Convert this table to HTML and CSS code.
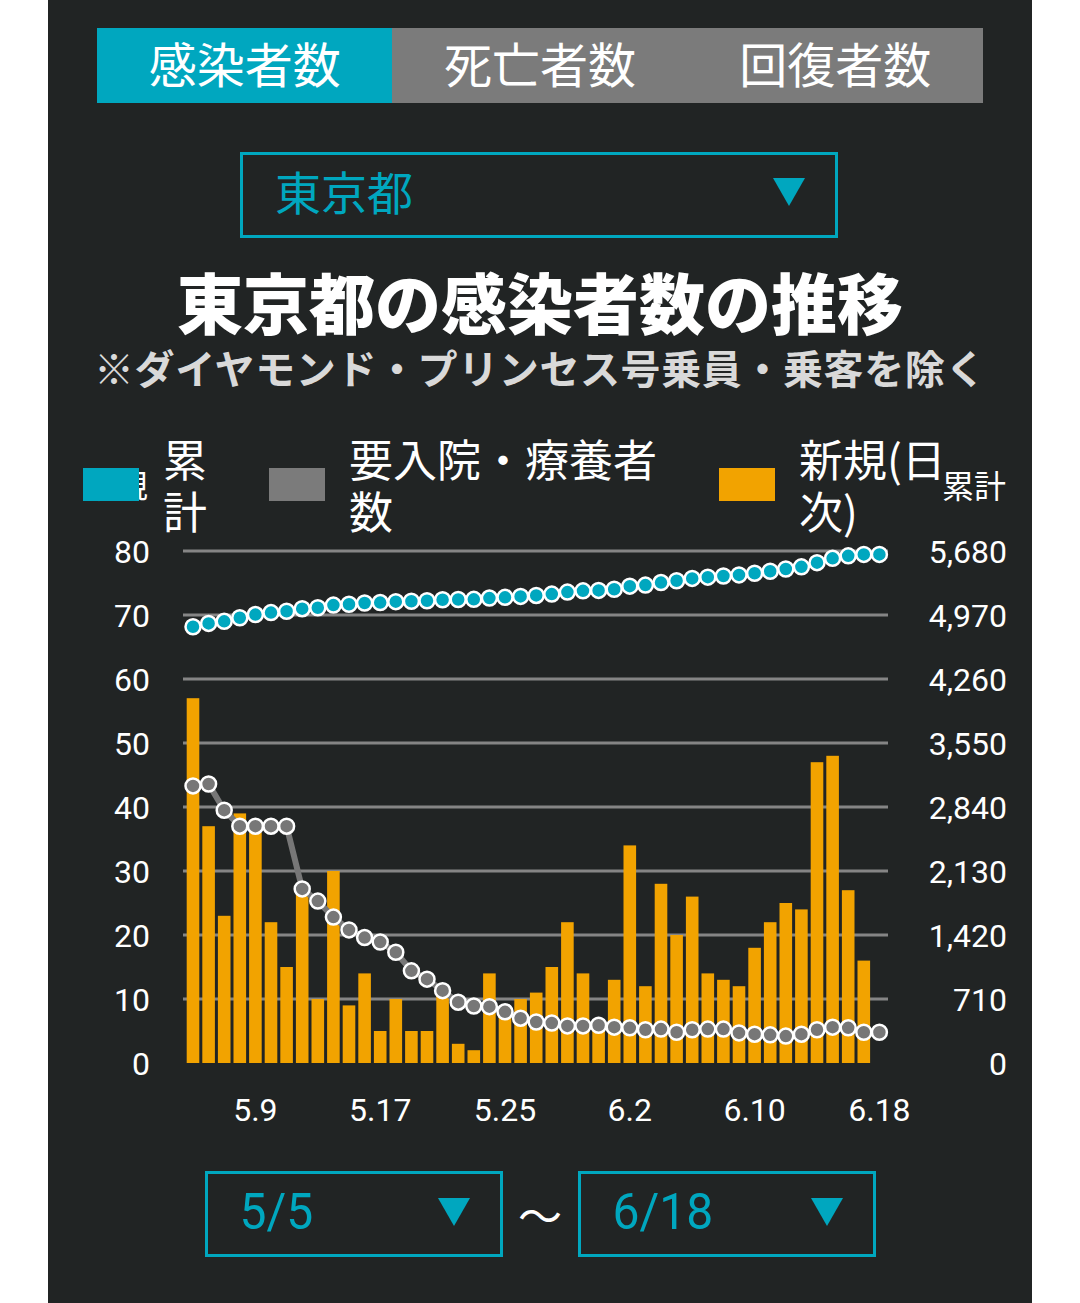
FILE: index.html
```html
<!DOCTYPE html>
<html lang="ja">
<head>
<meta charset="utf-8">
<title>東京都の感染者数の推移</title>
<link rel="stylesheet" href="styles.css">
</head>
<body>
<div class="panel">
  <div class="tabs">
    <div class="tab active">感染者数</div>
    <div class="tab">死亡者数</div>
    <div class="tab">回復者数</div>
  </div>
  <div class="select pref">
    <span class="select-text">東京都</span>
    <span class="tri"></span>
  </div>
  <h1 class="title">東京都の感染者数の推移</h1>
  <p class="note">※ダイヤモンド・プリンセス号乗員・乗客を除く</p>
  <div class="legend">
    <span class="axis-title axis-left">新規</span>
    <span class="axis-title axis-right">累計</span>
    <div class="legend-item">
      <span class="swatch teal"></span>
      <span class="legend-label w1">累<br>計</span>
    </div>
    <div class="legend-item">
      <span class="swatch gray"></span>
      <span class="legend-label w2">要入院・療養者<br>数</span>
    </div>
    <div class="legend-item">
      <span class="swatch orange"></span>
      <span class="legend-label w3">新規(日<br>次)</span>
    </div>
  </div>
  <svg id="chart" class="chart" width="984" height="600" viewBox="0 0 984 600" xmlns="http://www.w3.org/2000/svg"></svg>
  <div class="range">
    <div class="select date">
      <span class="select-text">5/5</span>
      <span class="tri"></span>
    </div>
    <span class="tilde">〜</span>
    <div class="select date">
      <span class="select-text">6/18</span>
      <span class="tri"></span>
    </div>
  </div>
</div>
<script src="chart.js"></script>
</body>
</html>
```

FILE: styles.css
```css
html, body {
  margin: 0;
  padding: 0;
  background: #ffffff;
}
body {
  font-family: "Noto Sans CJK JP", "Noto Sans", sans-serif;
}
.panel {
  width: 984px;
  min-height: 1303px;
  margin-left: 48px;
  background: #212424;
  padding-top: 28px;
  box-sizing: border-box;
  color: #ffffff;
}
.tabs {
  display: flex;
  width: 886px;
  height: 75px;
  margin-left: 49px;
}
.tab {
  flex: 1;
  display: flex;
  align-items: center;
  justify-content: center;
  padding-bottom: 8px;
  box-sizing: border-box;
  background: #7b7b7b;
  color: #ffffff;
  font-size: 48px;
  line-height: 1;
}
.tab.active {
  background: #00a7bf;
}
.select {
  display: flex;
  align-items: center;
  justify-content: space-between;
  border: 3px solid #00a7bf;
  box-sizing: border-box;
  color: #00a7bf;
}
.select.pref {
  width: 598px;
  height: 86px;
  margin: 49px 0 0 192px;
  padding: 0 30px 6px 32px;
}
.select.pref .select-text {
  font-size: 46px;
  line-height: 1;
  padding-bottom: 4px;
}
.tri {
  width: 0;
  height: 0;
  border-left: 16px solid transparent;
  border-right: 16px solid transparent;
  border-top: 28px solid #00a7bf;
}
.title {
  margin: 26px 0 0;
  text-align: center;
  font-size: 66px;
  line-height: 72px;
  font-weight: 900;
  color: #ffffff;
}
.note {
  margin: 7px 0 0;
  text-align: center;
  font-size: 40px;
  line-height: 48px;
  font-weight: 700;
  color: #d9d9d9;
  letter-spacing: 0.6px;
}
.legend {
  position: relative;
  display: flex;
  align-items: center;
  gap: 62px;
  margin-top: 42px;
  padding-left: 35px;
  height: 107px;
  padding-bottom: 6px;
  box-sizing: border-box;
}
.legend-item {
  position: relative;
  display: flex;
  align-items: center;
  gap: 24px;
  z-index: 1;
}
.swatch {
  width: 56px;
  height: 33px;
  margin-top: 2px;
}
.swatch.teal { background: #00a7bf; }
.swatch.gray { background: #7b7b7b; }
.swatch.orange { background: #f2a300; }
.legend-label {
  font-size: 44px;
  line-height: 52px;
  color: #ffffff;
  white-space: nowrap;
}
.axis-title {
  position: absolute;
  top: 33px;
  font-size: 32px;
  line-height: 36px;
  color: #ffffff;
}
.axis-left {
  left: 36px;
  z-index: 0;
}
.axis-right {
  left: 894px;
}
.chart {
  display: block;
  overflow: visible;
  font-family: Roboto, "Noto Sans", sans-serif;
}
.chart .grid {
  stroke: #858585;
  stroke-width: 3;
}
.chart .axis-label {
  fill: #ffffff;
  font-size: 32px;
}
.chart .bar {
  fill: #f2a300;
}
.chart .hosp-line {
  fill: none;
  stroke: #777777;
  stroke-width: 6;
  stroke-linejoin: round;
}
.chart .cum-line {
  fill: none;
  stroke: #00a7bf;
  stroke-width: 4;
}
.chart .dot {
  stroke: #ffffff;
  stroke-width: 2.5;
}
.chart .dot.hosp { fill: #777777; }
.chart .dot.cum { fill: #00a7bf; }
.range {
  display: flex;
  align-items: center;
  justify-content: center;
  gap: 0;
  margin-top: 31px;
}
.select.date {
  width: 298px;
  height: 86px;
  padding: 0 30px 4px 32px;
}
.select.date .select-text {
  font-family: Roboto, "Noto Sans", sans-serif;
  font-size: 48px;
  line-height: 1;
  transform: scaleY(1.05);
}
.tilde {
  width: 75px;
  text-align: center;
  font-size: 44px;
  line-height: 1;
  color: #ffffff;
}
```

FILE: chart.js
```js
(function () {
  var NS = 'http://www.w3.org/2000/svg';
  var svg = document.getElementById('chart');
  var x0 = 145, dx = 15.6, yBase = 523, k = 6.4;
  var newC = [57,37,23,39,36,22,15,28,10,30,9,14,5,10,5,5,11,3,2,14,8,10,11,15,22,14,5,13,34,12,28,20,26,14,13,12,18,22,25,24,47,48,27,16];
  var hosp = [43.3,43.6,39.5,37,37,37,37,27.2,25.3,22.8,20.8,19.6,18.9,17.3,14.4,13.1,11.3,9.5,8.9,8.8,8.0,7.0,6.4,6.25,5.8,5.8,5.9,5.6,5.5,5.2,5.3,4.8,5.2,5.3,5.3,4.7,4.5,4.4,4.2,4.5,5.2,5.6,5.5,4.8,4.8];
  var cum = [], c = 4840, i;
  for (i = 0; i < 45; i++) {
    if (i > 0 && i < newC.length) c += newC[i];
    cum.push(c);
  }
  function el(name, attrs, text) {
    var e = document.createElementNS(NS, name);
    for (var a in attrs) e.setAttribute(a, attrs[a]);
    if (text !== undefined) e.textContent = text;
    svg.appendChild(e);
    return e;
  }
  var left = ['0','10','20','30','40','50','60','70','80'];
  var right = ['0','710','1,420','2,130','2,840','3,550','4,260','4,970','5,680'];
  for (i = 0; i <= 8; i++) {
    var y = yBase - 64 * i;
    if (i > 0) el('line', {x1: 135, x2: 840, y1: y, y2: y, 'class': 'grid'});
    el('text', {x: 102, y: y + 11.5, 'text-anchor': 'end', 'class': 'axis-label'}, left[i]);
    el('text', {x: 959, y: y + 11.5, 'text-anchor': 'end', 'class': 'axis-label'}, right[i]);
  }
  for (i = 0; i < newC.length; i++) {
    var h = newC[i] * k;
    el('rect', {x: x0 + dx * i - 6.3, y: yBase - h, width: 12.6, height: h, 'class': 'bar'});
  }
  var hp = '', cp = '';
  for (i = 0; i < 45; i++) {
    var x = x0 + dx * i;
    hp += (i ? 'L' : 'M') + x.toFixed(1) + ' ' + (yBase - hosp[i] * k).toFixed(1);
    cp += (i ? 'L' : 'M') + x.toFixed(1) + ' ' + (yBase - cum[i] / 71 * k).toFixed(1);
  }
  el('path', {d: hp, 'class': 'hosp-line'});
  for (i = 0; i < 45; i++) {
    el('circle', {cx: x0 + dx * i, cy: yBase - hosp[i] * k, r: 7.5, 'class': 'dot hosp'});
  }
  el('path', {d: cp, 'class': 'cum-line'});
  for (i = 0; i < 45; i++) {
    el('circle', {cx: x0 + dx * i, cy: yBase - cum[i] / 71 * k, r: 7.5, 'class': 'dot cum'});
  }
  var xl = [[4,'5.9'],[12,'5.17'],[20,'5.25'],[28,'6.2'],[36,'6.10'],[44,'6.18']];
  for (i = 0; i < xl.length; i++) {
    el('text', {x: x0 + dx * xl[i][0], y: 581, 'text-anchor': 'middle', 'class': 'axis-label'}, xl[i][1]);
  }
})();
```
